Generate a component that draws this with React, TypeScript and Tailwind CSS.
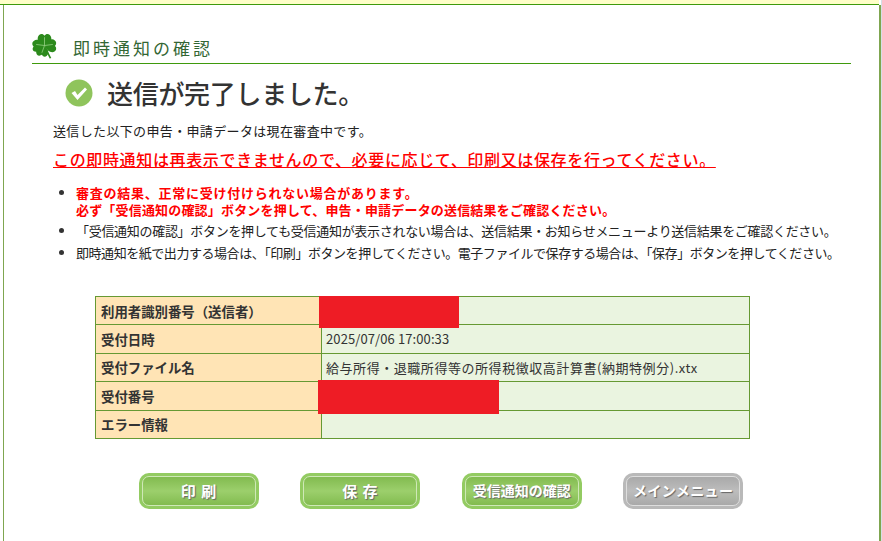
const jp = { fontFamily: '"Noto Sans CJK JP", "Liberation Sans", sans-serif' };

function Clover() {
  return (
    <svg width="27" height="27" viewBox="0 0 26 26" className="shrink-0 -mt-[5px] -ml-[1px]">
      <g fill="#2c8a1c">
        <path d="M13 13 C8 11 6 8.5 6.5 5.5 C7 2 11 0.5 13 3.5 C15 0.5 19 2 19.5 5.5 C20 8.5 18 11 13 13Z" />
        <path d="M13 13 C15 8.5 17.5 6.5 20.5 7 C24 7.5 25.5 11 23 13.5 C25.5 15.5 24 19.5 20.5 19.5 C17.5 19.5 15 17 13 13Z" />
        <path d="M13 13 C15.5 15.5 17 18 16.5 20.5 C16 24 12 25 10.5 22 C7.5 24 4.5 22 5 18.5 C5.5 15.5 9 13.5 13 13Z" />
        <path d="M13 13 C11 8.5 8.5 7 5.5 7.5 C1.5 8 0 11.5 2.5 14 C0.5 16.5 2 19.5 5.5 19 C8.5 18.5 11 16.5 13 13Z" />
        <path d="M15 16 L19.5 25 L18 25.5 L13.5 16.5Z" />
      </g>
      <path d="M13 5 V13 M5 12 L13 13 M21 12 L13 13 M13 13 L10.5 20" stroke="#9fd58c" strokeWidth="0.7" fill="none" />
    </svg>
  );
}

function Check() {
  return (
    <svg width="28" height="28" viewBox="0 0 28 28" className="shrink-0">
      <circle cx="14" cy="14" r="13.5" fill="#8fc45c" />
      <path d="M6.5 14 L10 12 L12.5 16 L20 8.5 L22 10.5 L12.5 21 Z" fill="#fff" />
    </svg>
  );
}

function Btn({ label, gray, cls }: { label: string; gray?: boolean; cls?: string }) {
  return (
    <div className={`w-[120px] h-[36px] rounded-[10px] p-[3px] ${gray ? "bg-[#b9b9b9]" : "bg-[#93cb62]"}`}>
      <div
        className={`w-full h-full rounded-[7px] border flex items-center justify-center font-bold text-white ${
          gray
            ? "border-[#dedede] bg-gradient-to-b from-[#a9a9a9] via-[#bdbdbd] to-[#a9a9a9]"
            : "border-[#cfe8b8] bg-gradient-to-b from-[#82bb4f] via-[#9ccf6c] to-[#82bb4f]"
        } ${cls ?? "text-[14px]"} [text-shadow:1px_1px_1px_#666]`}
      >
        {label}
      </div>
    </div>
  );
}

const rows = [
  ["利用者識別番号（送信者）", "", ""],
  ["受付日時", "2025/07/06 17:00:33", "tracking-[0.1px]"],
  ["受付ファイル名", "給与所得・退職所得等の所得税徴収高計算書(納期特例分).xtx", "tracking-[0.55px]"],
  ["受付番号", "", ""],
  ["エラー情報", "", ""],
];

export default function App() {
  return (
    <div className="w-[882px] h-[541px] overflow-hidden bg-[#d5dfe5] pr-[1px]" style={jp}>
      <div className="w-[881px] h-full bg-white text-[#333333] flex flex-col">
        <div className="h-[5px] shrink-0 mr-[2px] bg-[#ffffc8] border-b border-[#3f9a0c]" />
        <div className="flex-1 ml-[3px] border-l border-r-2 border-[#7fa650] pl-[28px] pr-[28px] pt-[28px]">
          <div className="flex items-center h-[31px] border-b border-[#3f9a0c]">
            <Clover />
            <h1 className="ml-[15px] text-[17px] leading-[22px] text-[#336633] font-normal tracking-[3px]">即時通知の確認</h1>
          </div>
          <div className="flex items-center pl-[33px] mt-[12px] h-[34px]">
            <Check />
            <p className="ml-[14px] text-[26px] leading-[34px] font-medium text-[#333333] tracking-[-0.3px]">送信が完了しました。</p>
          </div>
          <p className="ml-[21px] mt-[12px] text-[13px] leading-[18px] text-[#222] tracking-[0.35px] whitespace-nowrap">送信した以下の申告・申請データは現在審査中です。</p>
          <p className="ml-[21px] mt-[9px] text-[16px] leading-[20px] underline font-medium text-[#ff0000] tracking-[0.65px] whitespace-nowrap">
            この即時通知は再表示できませんので、必要に応じて、印刷又は保存を行ってください。
          </p>
          <ul className="ml-[44px] mt-[15px] list-disc text-[13px] leading-[17px] text-[#222] whitespace-nowrap marker:text-[#333]">
            <li className="font-bold text-[#ff0000] marker:text-[#333] tracking-[0.18px]">
              <span className="tracking-[0.75px]">審査の結果、正常に受け付けられない場合があります。</span>
              <br />
              必ず「受信通知の確認」ボタンを押して、申告・申請データの送信結果をご確認ください。
            </li>
            <li className="mt-[4px] tracking-[-0.3px]">「受信通知の確認」ボタンを押しても受信通知が表示されない場合は、送信結果・お知らせメニューより送信結果をご確認ください。</li>
            <li className="mt-[5px] tracking-[-0.45px]">即時通知を紙で出力する場合は、「印刷」ボタンを押してください。電子ファイルで保存する場合は、「保存」ボタンを押してください。</li>
          </ul>
          <div className="relative mt-[35px] ml-[63px] w-[655px]">
            <table className="w-full border-collapse text-[13px]">
              <tbody>
                {rows.map(([k, v, t]) => (
                  <tr key={k} className="h-[28.4px]">
                    <th className="w-[226px] border border-[#669933] bg-[#ffe4b5] text-left font-bold text-[13.4px] pl-[5px] text-[#333] whitespace-nowrap">{k}</th>
                    <td className={`border border-[#669933] bg-[#eaf4e0] pl-[4px] whitespace-nowrap text-[#333] ${t}`}>{v}</td>
                  </tr>
                ))}
              </tbody>
            </table>
            <div className="absolute left-[224px] top-0 w-[140px] h-[32px] bg-[#ee1c25]" />
            <div className="absolute left-[223px] top-[84px] w-[181px] h-[34px] bg-[#ee1c25]" />
          </div>
          <div className="flex mt-[34px] ml-[107px] gap-[41.4px]">
            <Btn label="印 刷" cls="text-[15px] tracking-[1px]" />
            <Btn label="保 存" cls="text-[15px] tracking-[1px]" />
            <Btn label="受信通知の確認" cls="text-[14px] tracking-[0px]" />
            <Btn label="メインメニュー" gray cls="text-[14px] tracking-[0.4px]" />
          </div>
        </div>
      </div>
    </div>
  );
}
